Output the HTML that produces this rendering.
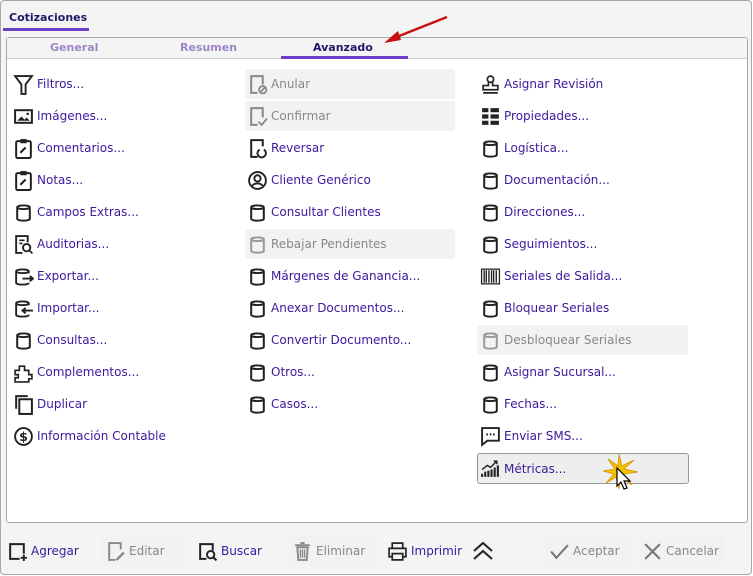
<!DOCTYPE html>
<html><head><meta charset="utf-8"><style>
*{box-sizing:border-box;margin:0;padding:0}
body{width:753px;height:576px;background:#fff;font-family:"DejaVu Sans","Liberation Sans",sans-serif;font-size:12px;color:#3a1a9c;position:relative;overflow:hidden}
.frame{position:absolute;left:0;top:0;width:752px;height:575px;border:1px solid #a8a8a8;border-radius:4px;background:#f4f4f4}
.tabhdr{position:absolute;left:9px;top:11px;font-weight:bold;font-size:11px;color:#1e1a6a}
.tabul{position:absolute;left:3px;top:28px;width:86px;height:3px;background:#6b3fc8}
.panel{position:absolute;left:6px;top:37px;width:742px;height:486px;border:1px solid #a8a8a8;border-radius:3px;background:#fff}
.sub{position:absolute;left:7px;top:38px;width:740px;height:21px;background:#f4f4f4;border-bottom:1px solid #ccc}
.st{position:absolute;top:41px;font-weight:bold;font-size:11px;color:#9c86c8}
.it{position:absolute;height:30px;display:flex;align-items:center;white-space:nowrap}
.it svg{width:21px;height:21px;margin-right:3px;flex:none}
.dis{color:#888;background:#f2f2f2;border-radius:2px}
</style></head><body>
<svg width="0" height="0" style="position:absolute">
<defs>
<symbol id="db" viewBox="0 0 20 20"><path d="M4 5c0-2.3 12-2.3 12 0v11c0 2.3-12 2.3-12 0z M4 5c0 2.3 12 2.3 12 0" fill="none" stroke="#222" stroke-width="1.9"/></symbol>
<symbol id="dbg" viewBox="0 0 20 20"><path d="M4 5c0-2.3 12-2.3 12 0v11c0 2.3-12 2.3-12 0z M4 5c0 2.3 12 2.3 12 0" fill="none" stroke="#999" stroke-width="1.9"/></symbol>
<symbol id="clip" viewBox="0 0 20 20"><rect x="3" y="3" width="14" height="16" rx="1.5" fill="none" stroke="#222" stroke-width="1.9"/><rect x="7" y="1" width="6" height="4" fill="#222"/><path d="M7 14l5-5" stroke="#222" stroke-width="2"/></symbol>
</defs></svg>
<div class="frame"></div>
<div class="tabhdr">Cotizaciones</div><div class="tabul"></div>
<div class="panel"></div>
<div class="sub"></div>
<div class="st" style="left:50px">General</div>
<div class="st" style="left:180px">Resumen</div>
<div class="st" style="left:313px;color:#1e1a6a">Avanzado</div>
<div style="position:absolute;left:281px;top:56px;width:127px;height:3px;background:#6b3fc8"></div>
<svg style="position:absolute;left:380px;top:14px" width="70" height="34"><path d="M67 3L14 24" stroke="#c81010" stroke-width="2.5"/><path d="M4 29l14-12 3 9z" fill="#c81010"/></svg>

<div class="it" style="left:13px;top:69px"><svg viewBox="0 0 20 20"><path d="M2 2h16l-6 8v9H8v-9z" fill="none" stroke="#222" stroke-width="1.8"/></svg>Filtros...</div>
<div class="it" style="left:13px;top:101px"><svg viewBox="0 0 20 20"><rect x="2" y="4" width="16" height="12" fill="none" stroke="#222" stroke-width="1.9"/><path d="M4 14l4-4 3 3 2-2 3 3z" fill="#222"/><circle cx="14" cy="7.5" r="1.2" fill="#222"/></svg>Imágenes...</div>
<div class="it" style="left:13px;top:133px"><svg><use href="#clip"/></svg>Comentarios...</div>
<div class="it" style="left:13px;top:165px"><svg><use href="#clip"/></svg>Notas...</div>
<div class="it" style="left:13px;top:197px"><svg><use href="#db"/></svg>Campos Extras...</div>
<div class="it" style="left:13px;top:229px"><svg viewBox="0 0 20 20"><path d="M9 18H3V2h11v6" fill="none" stroke="#222" stroke-width="1.8"/><circle cx="13" cy="13" r="3.5" fill="none" stroke="#222" stroke-width="1.8"/><path d="M15.5 15.5l3 3M6 6h5M6 9h3" stroke="#222" stroke-width="1.6"/></svg>Auditorias...</div>
<div class="it" style="left:13px;top:261px"><svg viewBox="0 0 20 20"><path d="M15 7V5c0-2.3-12-2.3-12 0v11c0 2.3 12 2.3 12 0M3 5c0 2.3 12 2.3 12 0M9 12h10M16 9.5l3 2.5-3 2.5" fill="none" stroke="#222" stroke-width="1.8"/></svg>Exportar...</div>
<div class="it" style="left:13px;top:293px"><svg viewBox="0 0 20 20"><path d="M15 7V5c0-2.3-12-2.3-12 0v11c0 2.3 12 2.3 12 0M3 5c0 2.3 12 2.3 12 0M19 12H9M12 9.5L9 12l3 2.5" fill="none" stroke="#222" stroke-width="1.8"/></svg>Importar...</div>
<div class="it" style="left:13px;top:325px"><svg><use href="#db"/></svg>Consultas...</div>
<div class="it" style="left:13px;top:357px"><svg viewBox="0 0 20 20"><path d="M2 8h4V4h5v4h4v4h3v4h-3v3H2v-4h3v-3H2z" fill="none" stroke="#222" stroke-width="1.6"/></svg>Complementos...</div>
<div class="it" style="left:13px;top:389px"><svg viewBox="0 0 20 20"><path d="M3 14V2h11" fill="none" stroke="#222" stroke-width="1.9"/><rect x="6" y="5" width="12" height="14" fill="none" stroke="#222" stroke-width="1.9"/></svg>Duplicar</div>
<div class="it" style="left:13px;top:421px"><svg viewBox="0 0 20 20"><circle cx="10" cy="10" r="8" fill="none" stroke="#222" stroke-width="1.8"/><text x="10" y="14.5" font-size="12" text-anchor="middle" font-family="DejaVu Sans" font-weight="bold" fill="#222">$</text></svg>Información Contable</div>

<div class="it dis" style="left:245px;top:69px;width:210px;padding-left:2px"><svg viewBox="0 0 20 20"><path d="M10 18H4V2h11v8" fill="none" stroke="#888" stroke-width="1.9"/><circle cx="15" cy="15" r="3.5" fill="none" stroke="#888" stroke-width="1.7"/><path d="M12.5 17.5l5-5" stroke="#888" stroke-width="1.7"/></svg>Anular</div>
<div class="it dis" style="left:245px;top:101px;width:210px;padding-left:2px"><svg viewBox="0 0 20 20"><path d="M10 18H4V2h11v9" fill="none" stroke="#888" stroke-width="1.9"/><path d="M11 15l3 3 5-6" fill="none" stroke="#888" stroke-width="1.7"/></svg>Confirmar</div>
<div class="it" style="left:247px;top:133px"><svg viewBox="0 0 20 20"><path d="M10 18H4V2h11v6" fill="none" stroke="#222" stroke-width="1.9"/><path d="M12 11a4 4 0 1 0 4 0" fill="none" stroke="#222" stroke-width="1.8"/></svg>Reversar</div>
<div class="it" style="left:247px;top:165px"><svg viewBox="0 0 20 20"><circle cx="10" cy="10" r="8" fill="none" stroke="#222" stroke-width="1.8"/><circle cx="10" cy="8" r="3" fill="none" stroke="#222" stroke-width="1.8"/><path d="M5 15c2-3 8-3 10 0" fill="none" stroke="#222" stroke-width="1.8"/></svg>Cliente Genérico</div>
<div class="it" style="left:247px;top:197px"><svg><use href="#db"/></svg>Consultar Clientes</div>
<div class="it dis" style="left:245px;top:229px;width:210px;padding-left:2px"><svg><use href="#dbg"/></svg>Rebajar Pendientes</div>
<div class="it" style="left:247px;top:261px"><svg><use href="#db"/></svg>Márgenes de Ganancia...</div>
<div class="it" style="left:247px;top:293px"><svg><use href="#db"/></svg>Anexar Documentos...</div>
<div class="it" style="left:247px;top:325px"><svg><use href="#db"/></svg>Convertir Documento...</div>
<div class="it" style="left:247px;top:357px"><svg><use href="#db"/></svg>Otros...</div>
<div class="it" style="left:247px;top:389px"><svg><use href="#db"/></svg>Casos...</div>

<div class="it" style="left:480px;top:69px"><svg viewBox="0 0 20 20"><circle cx="10" cy="5" r="3" fill="none" stroke="#222" stroke-width="1.6"/><path d="M8 8v3H3v4h14v-4h-5V8M3 18h14" fill="none" stroke="#222" stroke-width="1.6"/></svg>Asignar Revisión</div>
<div class="it" style="left:480px;top:101px"><svg viewBox="0 0 20 20"><path d="M2 2h6v4H2zM10 2h8v4h-8zM2 8h6v4H2zM10 8h8v4h-8zM2 14h6v4H2zM10 14h8v4h-8z" fill="#222"/></svg>Propiedades...</div>
<div class="it" style="left:480px;top:133px"><svg><use href="#db"/></svg>Logística...</div>
<div class="it" style="left:480px;top:165px"><svg><use href="#db"/></svg>Documentación...</div>
<div class="it" style="left:480px;top:197px"><svg><use href="#db"/></svg>Direcciones...</div>
<div class="it" style="left:480px;top:229px"><svg><use href="#db"/></svg>Seguimientos...</div>
<div class="it" style="left:480px;top:261px"><svg viewBox="0 0 20 20"><rect x="1.5" y="3" width="17" height="14" fill="none" stroke="#222" stroke-width="1.2"/><path d="M4 4v12M6 4v12M8.5 4v12M11 4v12M13 4v12M15.5 4v12" stroke="#222" stroke-width="1.3"/></svg>Seriales de Salida...</div>
<div class="it" style="left:480px;top:293px"><svg><use href="#db"/></svg>Bloquear Seriales</div>
<div class="it dis" style="left:477px;top:325px;width:211px;padding-left:3px"><svg><use href="#dbg"/></svg>Desbloquear Seriales</div>
<div class="it" style="left:480px;top:357px"><svg><use href="#db"/></svg>Asignar Sucursal...</div>
<div class="it" style="left:480px;top:389px"><svg><use href="#db"/></svg>Fechas...</div>
<div class="it" style="left:480px;top:421px"><svg viewBox="0 0 20 20"><path d="M2 2h16v12H7l-5 4z" fill="none" stroke="#222" stroke-width="1.8"/><path d="M6 8h1.5M9.3 8h1.5M12.5 8h1.5" stroke="#222" stroke-width="2"/></svg>Enviar SMS...</div>
<div class="it" style="left:477px;top:453px;width:212px;height:31px;padding-left:2px;background:#eeeeee;border:1px solid #999;border-radius:3px"><svg viewBox="0 0 20 20"><path d="M2 18v-3M5 18v-5M8 18v-6M11 18v-7M14 18v-9M17 18v-11" stroke="#222" stroke-width="2"/><path d="M2 11l5-4 3 2 6-6M13 3h3v3" fill="none" stroke="#222" stroke-width="1.4"/></svg>Métricas...</div>
<svg style="position:absolute;left:602px;top:452px" width="40" height="45"><path d="M17 2l3 12 12-6-10 9 14 3-14 2 8 11-11-8-2 12-3-12-10 6 8-9-11-3 12-2-7-10 10 7z" fill="#f5c400" stroke="#d89000" stroke-width=".8"/><path d="M15 16v18l4-4 3 7 3-1-3-7h6z" fill="#fff" stroke="#000" stroke-width="1.2"/></svg>

<div class="it" style="left:7px;top:536px"><svg viewBox="0 0 20 20"><path d="M12 17H3V3h13v9" fill="none" stroke="#222" stroke-width="1.9"/><path d="M16 13v6M13 16h6" stroke="#222" stroke-width="1.8"/></svg>Agregar</div>
<div class="it dis" style="left:100px;top:536px;width:85px;padding-left:5px"><svg viewBox="0 0 20 20"><path d="M10 18H4V2h11v6" fill="none" stroke="#888" stroke-width="1.8"/><path d="M11 18l7-7" stroke="#888" stroke-width="2.2"/></svg>Editar</div>
<div class="it" style="left:197px;top:536px"><svg viewBox="0 0 20 20"><path d="M9 17H3V3h12v6" fill="none" stroke="#222" stroke-width="1.9"/><circle cx="13" cy="13" r="3.5" fill="none" stroke="#222" stroke-width="1.8"/><path d="M15.5 15.5l3 3" stroke="#222" stroke-width="2"/></svg>Buscar</div>
<div class="it dis" style="left:290px;top:536px;width:85px;padding-left:2px"><svg viewBox="0 0 20 20"><path d="M3 4h14M8 2h4M5 6h10l-1 12H6z" fill="none" stroke="#888" stroke-width="1.8"/><path d="M8 8v8M10 8v8M12 8v8" stroke="#888" stroke-width="1.3"/></svg>Eliminar</div>
<div class="it" style="left:387px;top:536px"><svg viewBox="0 0 20 20"><path d="M5 7V2h10v5M5 15H2V7h16v8h-3M5 12h10v6H5z" fill="none" stroke="#222" stroke-width="1.6"/></svg>Imprimir</div>
<svg style="position:absolute;left:472px;top:541px" width="22" height="20"><path d="M2 10l9-8 9 8M2 18l9-8 9 8" fill="none" stroke="#222" stroke-width="2"/></svg>
<div class="it dis" style="left:545px;top:536px;width:85px;padding-left:4px"><svg viewBox="0 0 20 20"><path d="M2 10l5 6L18 4" fill="none" stroke="#777" stroke-width="2"/></svg>Aceptar</div>
<div class="it dis" style="left:640px;top:536px;width:85px;padding-left:2px"><svg viewBox="0 0 20 20"><path d="M3 3l14 14M17 3L3 17" stroke="#777" stroke-width="2"/></svg>Cancelar</div>
</body></html>
